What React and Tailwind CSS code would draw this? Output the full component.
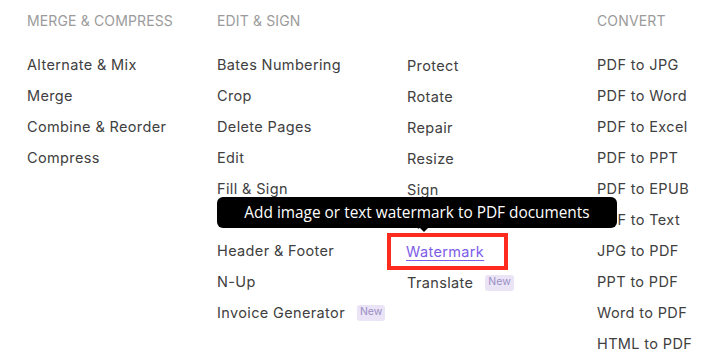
const mergeItems = ["Alternate & Mix", "Merge", "Combine & Reorder", "Compress"];

const editLeft = [
  { label: "Bates Numbering" },
  { label: "Crop" },
  { label: "Delete Pages" },
  { label: "Edit" },
  { label: "Fill & Sign" },
  { label: "Grayscale" },
  { label: "Header & Footer" },
  { label: "N-Up" },
  { label: "Invoice Generator", isNew: true },
];

const editRight = [
  { label: "Protect" },
  { label: "Rotate" },
  { label: "Repair" },
  { label: "Resize" },
  { label: "Sign" },
  { label: "Split" },
  { label: "Watermark", active: true },
  { label: "Translate", isNew: true },
];

const convertItems = [
  "PDF to JPG",
  "PDF to Word",
  "PDF to Excel",
  "PDF to PPT",
  "PDF to EPUB",
  "PDF to Text",
  "JPG to PDF",
  "PPT to PDF",
  "Word to PDF",
  "HTML to PDF",
];

function Heading({ children }) {
  return (
    <h3 className="h-[18px] leading-[18px] text-[14px] text-[#9b9b9b] uppercase tracking-[0.01em] mb-[19px] whitespace-nowrap">
      {children}
    </h3>
  );
}

function NewBadge() {
  return (
    <span className="ml-[12px] inline-flex items-center h-[16px] px-[3px] rounded-[3px] bg-[#ebe4f6] text-[#9a8fc4] text-[10.5px] tracking-normal leading-none">
      New
    </span>
  );
}

function Tooltip() {
  return (
    <div className="absolute left-[-190px] bottom-[39px] w-[400px] h-[31px] rounded-[6px] bg-black flex items-center justify-center font-['Open_Sans',sans-serif] text-white text-[15.4px] tracking-normal z-10">
      Add image or text watermark to PDF documents
      <span className="absolute left-[202px] bottom-[-4px] w-0 h-0 border-x-[5px] border-x-transparent border-t-[5px] border-t-black" />
    </div>
  );
}

function Item({ item }) {
  if (item.active) {
    return (
      <li className="relative h-[31px] flex items-center">
        <Tooltip />
        <a
          href="#"
          className="ml-[-20px] flex items-center w-[121px] h-[37px] pl-[15px] border-[4.5px] border-[#ff2b1f] text-[#7d5ce8] underline underline-offset-[3px] decoration-[1px]"
        >
          {item.label}
        </a>
      </li>
    );
  }
  return (
    <li className="h-[31px] flex items-center whitespace-nowrap">
      {item.label}
      {item.isNew && <NewBadge />}
    </li>
  );
}

export default function App() {
  return (
    <div className="w-[712px] h-[359px] overflow-hidden bg-white pl-[27px] pt-[12px] font-['Inter',sans-serif] text-[14.5px] tracking-[0.025em] text-[#404040]">
      <div className="flex">
        <div className="w-[190px]">
          <Heading>Merge &amp; Compress</Heading>
          <ul>
            {mergeItems.map((m) => (
              <Item key={m} item={{ label: m }} />
            ))}
          </ul>
        </div>

        <div className="w-[380px]">
          <Heading>Edit &amp; Sign</Heading>
          <div className="flex">
            <ul className="w-[190px]">
              {editLeft.map((it) => (
                <Item key={it.label} item={it} />
              ))}
            </ul>
            <ul className="w-[190px] pt-[1px]">
              {editRight.map((it) => (
                <Item key={it.label} item={it} />
              ))}
            </ul>
          </div>
        </div>

        <div className="w-[115px]">
          <Heading>Convert</Heading>
          <ul>
            {convertItems.map((c) => (
              <Item key={c} item={{ label: c }} />
            ))}
          </ul>
        </div>
      </div>
    </div>
  );
}
